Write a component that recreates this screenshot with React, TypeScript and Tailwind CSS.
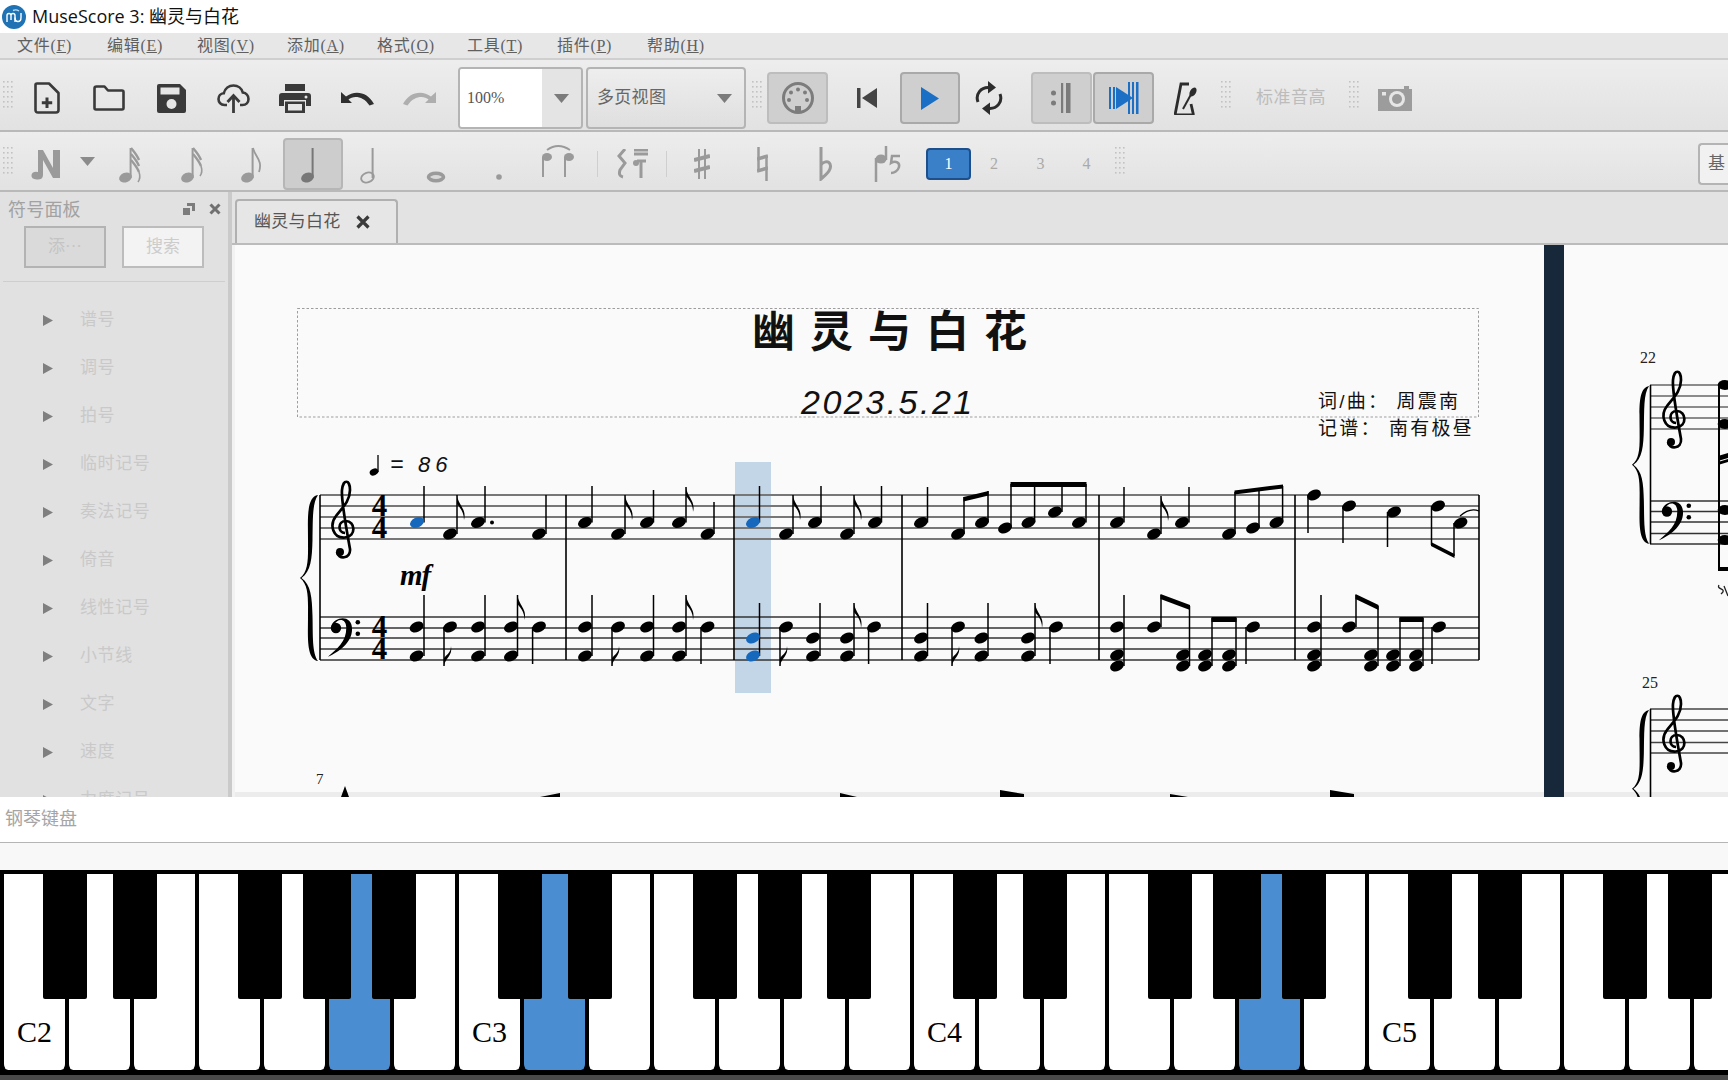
import React from "react";

const ICON = "#3a3a3a";
const GREY = "#9a9a9a";

function Handle({ h = 34 }: { h?: number }) {
  const dots: React.ReactNode[] = [];
  for (let c = 0; c < 3; c++)
    for (let r = 0; r < Math.floor(h / 5); r++)
      dots.push(<rect key={c + "-" + r} x={c * 4} y={r * 5} width={1.6} height={1.6} fill="#c2c2c2" />);
  return (
    <svg width={10} height={h} className="block">
      {dots}
    </svg>
  );
}

function Arrow({ color = "#7b7b7b" }: { color?: string }) {
  return (
    <svg width={15} height={9} className="block">
      <path d="M0 0H15L7.5 9Z" fill={color} />
    </svg>
  );
}

function Cell({ className, children }: { className: string; children?: React.ReactNode }) {
  return <div className={"flex items-center justify-center shrink-0 " + className}>{children}</div>;
}

function MenuItem({ label, k }: { label: string; k: string }) {
  return (
    <div className="w-[90px] shrink-0 text-[16px] tracking-[0.7px] text-[#5f5f5f]">
      {label}(<span className="underline">{k}</span>)
    </div>
  );
}

const Logo = () => (
  <svg width={24} height={24} viewBox="0 0 24 24" className="block">
    <circle cx={12} cy={12} r={12} fill="#1f72b3" />
    <path d="M5 17V10.5Q5 8.5 7 8.5T9 10.5V15M9 10.5Q9 8.5 11 8.5T13 10.5V17" stroke="#fff" strokeWidth={1.4} fill="none" />
    <path d="M13 12.5Q13 16.5 16 16.5T19 12.5V8" stroke="#fff" strokeWidth={1.4} fill="none" />
    <path d="M11 5.5Q14 4 17 6" stroke="#bfe0f5" strokeWidth={1.4} fill="none" />
  </svg>
);

const NewFile = () => (
  <svg width={26} height={32} viewBox="0 0 26 32" className="block">
    <path d="M3 1.500H15L24.500 11V28Q24.500 30.500 22 30.500H4Q1.500 30.500 1.500 28V3Q1.500 1.500 3 1.500Z" fill="none" stroke={ICON} strokeWidth={2.6} strokeLinejoin="round" />
    <path d="M13 15.500V26M7.800 20.800H18.200" stroke={ICON} strokeWidth={3} />
  </svg>
);
const Folder = () => (
  <svg width={32} height={26} viewBox="0 0 32 26" className="block">
    <path d="M3.500 1.500H11.500L15 5.500H29Q30.500 5.500 30.500 7V23Q30.500 24.500 29 24.500H3Q1.500 24.500 1.500 23V3.500Q1.500 1.500 3.500 1.500Z" fill="none" stroke={ICON} strokeWidth={2.6} strokeLinejoin="round" />
  </svg>
);
const Save = () => (
  <svg width={29} height={29} viewBox="0 0 29 29" className="block">
    <path d="M2 0H23L29 6V27Q29 29 27 29H2Q0 29 0 27V2Q0 0 2 0Z" fill={ICON} />
    <rect x={3.500} y={3.500} width={19} height={7} fill="#e6e6e6" />
    <circle cx={14.500} cy={20} r={5} fill="#e6e6e6" />
  </svg>
);
const Cloud = () => (
  <svg width={33} height={29} viewBox="0 0 33 29" className="block">
    <path d="M10 21H7.500C3.500 21 1.500 18 1.500 15C1.500 12 3.500 9.500 6.800 9.300C8 4.500 12 1.500 16.500 1.500C21 1.500 24.800 4.500 25.800 8.500C29 9 31.500 11.500 31.500 15C31.500 18.500 29 21 25.500 21H23" fill="none" stroke={ICON} strokeWidth={2.600} />
    <path d="M16.500 29V13M10.500 18L16.500 11.500L22.500 18" fill="none" stroke={ICON} strokeWidth={2.800} />
  </svg>
);
const Printer = () => (
  <svg width={32} height={29} viewBox="0 0 32 29" className="block">
    <rect x={6} y={0} width={20} height={7} fill={ICON} />
    <path d="M3 9H29Q32 9 32 12V22H27V16H5V22H0V12Q0 9 3 9Z" fill={ICON} />
    <path d="M6 17.500H26V29H6Z" fill={ICON} />
    <rect x={9} y={20} width={14} height={6.500} fill="#e6e6e6" />
    <circle cx={27} cy={13} r={1.500} fill="#e6e6e6" />
  </svg>
);
const Undo = ({ color = "#2f2f2f", flip = false }: { color?: string; flip?: boolean }) => (
  <svg width={33} height={15} viewBox="0 0 33 15" className={flip ? "block -scale-x-100" : "block"}>
    <path d="M0 1V12H11L7.500 8.500C12 4.500 22 4.500 28.500 14.500L33 13C27 1 14 -1.500 5 5.500Z" fill={color} />
  </svg>
);

const Midi = () => (
  <svg width={34} height={34} viewBox="0 0 34 34" className="block">
    <circle cx={17} cy={17} r={14.500} fill="none" stroke="#7c7c7c" strokeWidth={3} />
    {[[8, 19], [10, 11.500], [17, 8.500], [24, 11.500], [26, 19]].map(([x, y], i) => (
      <circle key={i} cx={x} cy={y} r={2} fill="#7c7c7c" />
    ))}
    <rect x={14} y={25} width={6} height={5} fill="#7c7c7c" />
  </svg>
);
const Skip = () => (
  <svg width={20} height={20} className="block">
    <rect x={0} y={0} width={3.500} height={20} fill="#444" />
    <path d="M20 0V20L5 10Z" fill="#444" />
  </svg>
);
const Play = () => (
  <svg width={18} height={23} className="block">
    <path d="M0 0L18 11.500L0 23Z" fill="#1b6fc4" />
  </svg>
);
const Loop = () => (
  <svg width={28} height={34} viewBox="0 0 28 34" className="block">
    <path d="M3 21C0 13 6 6 14 6.500M25 13C28 21 22 28 14 27.500" fill="none" stroke="#2c2c2c" strokeWidth={3} />
    <path d="M13 0L21 6.500L13 12.500ZM15 21.500L7 27.500L15 34Z" fill="#2c2c2c" />
  </svg>
);
const PanelLeft = () => (
  <svg width={24} height={30} className="block">
    <circle cx={3.500} cy={10} r={2.500} fill="#7b7b7b" />
    <circle cx={3.500} cy={20} r={2.500} fill="#7b7b7b" />
    <rect x={11} y={0} width={2.200} height={30} fill="#7b7b7b" />
    <rect x={16} y={0} width={4.500} height={30} fill="#7b7b7b" />
  </svg>
);
const PanelRight = () => (
  <svg width={30} height={32} className="block">
    <rect x={0} y={5} width={2} height={22} fill="#1b6fc4" />
    <rect x={4} y={5} width={2} height={22} fill="#1b6fc4" />
    <path d="M7 5L24 16L7 27Z" fill="#1b6fc4" />
    <rect x={19} y={0} width={2} height={32} fill="#1b6fc4" />
    <rect x={23} y={0} width={2} height={32} fill="#1b6fc4" />
    <rect x={27} y={0} width={2.500} height={32} fill="#1b6fc4" />
  </svg>
);
const Metronome = () => (
  <svg width={24} height={33} viewBox="0 0 24 33" className="block">
    <path d="M1 33L7 2H15M20 33H1" fill="none" stroke="#2c2c2c" strokeWidth={2.800} />
    <path d="M9 27L20 7" stroke="#2c2c2c" strokeWidth={2} />
    <ellipse cx={19} cy={10} rx={3} ry={5} transform="rotate(30 19 10)" fill="#2c2c2c" />
    <path d="M19.500 33L17 22" stroke="#2c2c2c" strokeWidth={2.800} />
  </svg>
);
const Camera = () => (
  <svg width={34} height={25} className="block">
    <path d="M0 3H26V0H31V3H34V25H0Z" fill="#9c9c9c" />
    <circle cx={19} cy={13} r={8} fill="#e6e6e6" />
    <circle cx={19} cy={13} r={5} fill="#9c9c9c" />
    <rect x={4} y={6} width={4} height={3.500} fill="#e6e6e6" />
  </svg>
);

function NoteIcon({ flags = 0, color = GREY, hollow = false }: { flags?: number; color?: string; hollow?: boolean }) {
  const fl = [];
  for (let i = 0; i < flags; i++) {
    const y = 4 + i * 6;
    fl.push(
      flags === 1 ? (
        <path key={i} d={`M13 ${y}C15 ${y + 9} 23 ${y + 12} 19 ${y + 24}`} fill="none" stroke={color} strokeWidth={1.800} />
      ) : (
        <path key={i} d={`M13 ${y}Q19 ${y + 7} 21 ${y + 12}`} fill="none" stroke={color} strokeWidth={2.400} />
      )
    );
  }
  return (
    <svg width={26} height={40} viewBox="0 0 26 40" className="block">
      <rect x={11.600} y={4} width={2} height={30} fill={color} />
      <ellipse cx={7.500} cy={33.500} rx={6.500} ry={4.800} transform="rotate(-22 7.500 33.500)" fill={hollow ? "none" : color} stroke={color} strokeWidth={hollow ? 1.800 : 0} />
      {fl}
      {flags > 1 && <path d={`M21 ${4 + (flags - 1) * 6 + 12}Q23 ${4 + (flags - 1) * 6 + 18} 20 ${4 + (flags - 1) * 6 + 22}`} fill="none" stroke={color} strokeWidth={1.600} />}
    </svg>
  );
}

function NIcon() {
  return (
    <svg width={30} height={32} viewBox="0 0 30 32" className="block">
      <path d="M5 2H12L22 20V2H29V30H22L12 12V27Q12 32 5.500 31.500Q0 31 0.500 27Q1.500 23 7 24V2Z" fill={GREY} />
    </svg>
  );
}

function Palette() {
  const items = ["谱号", "调号", "拍号", "临时记号", "奏法记号", "倚音", "线性记号", "小节线", "文字", "速度", "力度记号"];
  return (
    <div className="w-[232px] shrink-0 h-full bg-[#e1e1e1] border-r-4 border-[#cacaca] overflow-hidden">
      <div className="flex items-center h-[32px] pl-[8px] pt-[2px]">
        <span className="text-[18px] text-[#a2a2a2] tracking-[0.2px] pt-[3px]">符号面板</span>
        <svg width={12} height={12} className="block ml-[102px]">
          <path d="M4 0H12V8H9V3H4ZM0 5H7V12H0Z" fill="#7c7c7c" />
        </svg>
        <svg width={12} height={12} className="block ml-[14px]">
          <path d="M1.500 1.500L10.500 10.500M10.500 1.500L1.500 10.500" stroke="#707070" strokeWidth={3} />
        </svg>
      </div>
      <div className="flex gap-[16px] pl-[24px] h-[42px] mt-[2px]">
        <div className="w-[82px] h-full flex items-center justify-center bg-[#dadada] border-2 border-[#b3b3b3] text-[17px] text-[#c4c4c4]">添···</div>
        <div className="w-[82px] h-full flex items-center justify-center bg-[#f3f3f3] border-2 border-[#bcbcbc] text-[17px] text-[#cccccc]">搜索</div>
      </div>
      <div className="h-[1px] mt-[13px] mx-[3px] bg-[#cecece]" />
      <div className="pt-[14px]">
        {items.map((t) => (
          <div key={t} className="h-[48px] flex items-center pl-[43px]">
            <svg width={10} height={11} className="block shrink-0">
              <path d="M0 0L10 5.500L0 11Z" fill="#7f7f7f" />
            </svg>
            <span className="ml-[27px] text-[17px] tracking-[0.6px] text-[#c9c9c9]">{t}</span>
          </div>
        ))}
      </div>
    </div>
  );
}

type Ch = { x: number; ys: number[]; sx: number; to: number; flag?: "u" | "d"; c?: string; dot?: boolean };
const H1 = 522.5;
const H2 = 534;
const BL = "#1668bd";
const t = (x: number, y: number, sx: number, to: number, flag?: "u" | "d", c?: string): Ch => ({ x, ys: [y], sx, to, flag, c });
const trebleNotes: Ch[] = [
  t(417, H1, 424, 486, undefined, BL),
  t(450, H2, 457, 495, "u"),
  { ...t(478, H1, 485, 486), dot: true },
  t(539, H2, 546, 495),
  t(585, H1, 592, 486),
  t(618, H2, 625, 495, "u"),
  t(647, H1, 653.500, 490),
  t(679, H1, 686, 487, "u"),
  t(707.500, H2, 714, 502),
  t(753, H1, 759.500, 486, undefined, BL),
  t(786, H2, 793, 495, "u"),
  t(815, H1, 821, 486),
  t(847, H2, 854, 495, "u"),
  t(875, H1, 881.500, 486),
  t(921, H1, 927.500, 487),
  t(958, H2, 964, 497),
  t(982, H1, 988, 491),
  t(1005, 528, 1011, 484),
  t(1028.500, H1, 1034.600, 484),
  t(1055, 512, 1062, 484),
  t(1079, H1, 1086, 484),
  t(1117, H1, 1124, 487),
  t(1154, H2, 1161, 496, "u"),
  t(1182, H1, 1189, 487),
  t(1229, H2, 1235, 492),
  t(1253, 528, 1259, 489),
  t(1276.500, H1, 1282.600, 486),
  t(1314, 495, 1308, 533),
  t(1349, 506, 1343, 543),
  t(1394, 512, 1387.500, 547),
  t(1438, 506, 1431.500, 545),
  t(1460.500, 523, 1454, 556),
];
const HI = 627;
const LO = 656;
const c2 = (x: number, sx: number, flag?: "u"): Ch => ({ x, ys: [HI, LO], sx, to: 595, flag });
const c3 = (x: number, sx: number, flag?: "u"): Ch => ({ x, ys: [638, LO], sx, to: 603, flag });
const dn = (x: number, sx: number, to = 664, flag?: "d"): Ch => ({ x, ys: [HI], sx, to, flag });
const bassNotes: Ch[] = [
  c2(416.600, 424),
  dn(450, 444, 666, "d"),
  c2(478, 485),
  c2(511, 517.500, "u"),
  dn(539, 532.600),
  c2(585, 592),
  dn(618, 612, 666, "d"),
  c2(647, 653.500),
  c2(679, 686, "u"),
  dn(707.500, 701),
  { ...c3(753, 759.500), c: BL },
  dn(786, 780, 666, "d"),
  c3(813, 820),
  c3(847, 854, "u"),
  dn(874, 868.600),
  c3(921, 927.500),
  dn(958, 952, 666, "d"),
  c3(981.400, 988),
  c3(1028, 1035, "u"),
  dn(1056, 1050),
  { x: 1117, ys: [627, 655, 666], sx: 1124, to: 595 },
  { x: 1154, ys: [627], sx: 1161, to: 595 },
  { x: 1183, ys: [655, 666], sx: 1189.500, to: 606 },
  { x: 1205, ys: [655, 666], sx: 1212, to: 618 },
  { x: 1229, ys: [655, 666], sx: 1236, to: 618 },
  dn(1253, 1246),
  { x: 1314, ys: [627, 655, 666], sx: 1321, to: 595 },
  { x: 1349, ys: [627], sx: 1356, to: 595 },
  { x: 1371, ys: [655, 666], sx: 1378, to: 606 },
  { x: 1393, ys: [655, 666], sx: 1400, to: 618 },
  { x: 1416, ys: [655, 666], sx: 1423, to: 618 },
  dn(1439, 1432),
];

function Note({ n }: { n: Ch }) {
  const fill = n.c ?? "#000";
  const up = n.to < n.ys[0];
  const from = up ? Math.max(...n.ys) : Math.min(...n.ys);
  return (
    <g>
      <line x1={n.sx} x2={n.sx} y1={from} y2={n.to} stroke="#000" strokeWidth={1.500} />
      {n.ys.map((y) => (
        <ellipse key={y} cx={n.x} cy={y} rx={7.300} ry={5} transform={`rotate(-25 ${n.x} ${y})`} fill={fill} />
      ))}
      {n.flag === "u" && <path d={`M${n.sx} ${n.to}C${n.sx + 1} ${n.to + 10} ${n.sx + 10} ${n.to + 14} ${n.sx + 7} ${n.to + 25}C${n.sx + 7} ${n.to + 16} ${n.sx + 2} ${n.to + 12} ${n.sx} ${n.to + 9}Z`} fill="#000" />}
      {n.flag === "d" && <path d={`M${n.sx} ${n.to}C${n.sx + 1} ${n.to - 8} ${n.sx + 9} ${n.to - 10} ${n.sx + 7} ${n.to - 20}C${n.sx + 7} ${n.to - 13} ${n.sx + 2} ${n.to - 11} ${n.sx} ${n.to - 8}Z`} fill="#000" />}
      {n.dot && <circle cx={n.x + 14} cy={n.ys[0]} r={2} fill="#000" />}
    </g>
  );
}

const Treble = ({ x, y }: { x: number; y: number }) => (
  <g transform={`translate(${x} ${y})`}>
    <path d="M1 5C-6 5 -7 -7 2 -7C11 -7 13 8 1 9.500C-11 10.500 -15 -3 -8 -12C-3 -19 6 -26 6 -38C6 -49 -1 -49 -2 -38C-3 -28 4 10 6 21C7 31 -6 32 -7 24" fill="none" stroke="#000" strokeWidth={2.700} />
    <circle cx={-4} cy={24} r={4} fill="#000" />
  </g>
);
const Bass = ({ x, y }: { x: number; y: number }) => (
  <g transform={`translate(${x} ${y}) scale(1.150)`}>
    <circle cx={-7} cy={0} r={4.500} fill="#000" />
    <path d="M-11 -2C-8 -10 7 -12 7 1C7 13 -5 21 -14 25C-6 18 2 12 2 0C2 -9 -6 -9 -9 -2Z" fill="#000" />
    <circle cx={12} cy={-5} r={2} fill="#000" />
    <circle cx={12} cy={5} r={2} fill="#000" />
  </g>
);
const Brace = ({ x, y, s = 1 }: { x: number; y: number; s?: number }) => (
  <path
    transform={`translate(${x} ${y}) scale(${s})`}
    d="M18 0C6 2 8 25 8 45C8 62 9 76 0 83C9 90 8 104 8 121C8 141 6 164 18 166C12 158 13 140 12.500 121C12 102 11 90 1.500 83C11 76 12 64 12.500 45C13 26 12 8 18 0Z"
    fill="#000"
  />
);

function Lines({ x1, x2, ys, color, w = 1.300 }: { x1: number; x2: number; ys: number[]; color: string; w?: number }) {
  return (
    <>
      {ys.map((y) => (
        <line key={y} x1={x1} x2={x2} y1={y} y2={y} stroke={color} strokeWidth={w} />
      ))}
    </>
  );
}

const SERIF = "'Liberation Serif','Noto Sans CJK SC',serif";
const HAND = "'Liberation Sans','Noto Sans CJK SC',sans-serif";

function Score() {
  const tre = [495, 506, 517, 528, 539];
  const bas = [617, 628, 638, 649, 660];
  return (
    <svg viewBox="235 245 1493 552" width={1493} height={552} className="block">
      <rect x={235} y={245} width={1493} height={552} fill="#fafafa" />
      <rect x={235} y={792} width={1493} height={5} fill="#ececec" />
      <rect x={1544} y={245} width={20} height={552} fill="#16283a" />
      <rect x={297.500} y={308.500} width={1181} height={108.500} fill="none" stroke="#9d9d9d" strokeWidth={1} strokeDasharray="2.500 2" />
      <text x={752} y={347} fontFamily={HAND} fontSize={43} fontWeight={700} letterSpacing={15} fill="#111">幽灵与白花</text>
      <text x={801} y={414} fontFamily={HAND} fontSize={34} fontStyle="italic" letterSpacing={2.500} fill="#111">2023.5.21</text>
      <text x={1318} y={408} fontFamily={HAND} fontSize={19} letterSpacing={2.200} fill="#111">词/曲： 周震南</text>
      <text x={1318} y={435} fontFamily={HAND} fontSize={19} letterSpacing={2.200} fill="#111">记谱： 南有极昼</text>

      <rect x={735} y={462} width={36} height={231} fill="#c3d6e8" />

      <Lines x1={320} x2={1479} ys={tre} color="#777" w={2} />
      <Lines x1={320} x2={1479} ys={bas} color="#333" />
      <line x1={320} x2={320} y1={495} y2={660} stroke="#000" strokeWidth={1.600} />
      {[566, 734, 902, 1099, 1295, 1479].map((x) => (
        <line key={x} x1={x} x2={x} y1={495} y2={660} stroke="#000" strokeWidth={1.600} />
      ))}
      <Brace x={300} y={495} />
      <Treble x={344} y={528} />
      <Bass x={344} y={628} />
      {[516, 538, 637, 659].map((y) => (
        <text key={y} x={379.500} y={y} textAnchor="middle" fontFamily={SERIF} fontWeight={700} fontSize={31} fill="#000">4</text>
      ))}

      <ellipse cx={374} cy={472} rx={4.500} ry={3.300} transform="rotate(-25 374 472)" fill="#000" />
      <line x1={378} x2={378} y1={472} y2={455} stroke="#000" strokeWidth={1.300} />
      <text x={390} y={472} fontFamily={HAND} fontStyle="italic" fontSize={23} letterSpacing={5} fill="#111">=</text>
      <text x={418} y={472} fontFamily={HAND} fontStyle="italic" fontSize={22} letterSpacing={5} fill="#111">86</text>
      <text x={400} y={585} fontFamily={SERIF} fontStyle="italic" fontWeight={700} fontSize={29} letterSpacing={-1} fill="#000">mf</text>

      {trebleNotes.map((n, i) => <Note key={"t" + i} n={n} />)}
      {bassNotes.map((n, i) => <Note key={"b" + i} n={n} />)}

      <path d="M963.500 497L988.500 491V495.500L963.500 501.500Z" fill="#000" />
      <rect x={1010.500} y={482} width={76} height={5} fill="#000" />
      <path d="M1234.500 490.500L1283 484.500V488.500L1234.500 494.500Z" fill="#000" />
      <path d="M1431 542L1454.500 554V558L1431 546Z" fill="#000" />
      <path d="M1460 516Q1470 507 1479 511" fill="none" stroke="#000" strokeWidth={1.200} />
      <path d="M1160.500 594L1190 605V610L1160.500 599Z" fill="#000" />
      <rect x={1211.500} y={617} width={25} height={5} fill="#000" />
      <path d="M1355.500 594L1378.500 605V610L1355.500 599Z" fill="#000" />
      <rect x={1399.500} y={617} width={24} height={5} fill="#000" />

      {/* next page */}
      <text x={1640} y={363} fontFamily={SERIF} fontSize={16} fill="#222">22</text>
      <Lines x1={1650} x2={1728} ys={[385, 396, 407, 418, 429]} color="#666" />
      <Lines x1={1650} x2={1728} ys={[501, 511.500, 522, 533.500, 544]} color="#333" />
      <line x1={1650.500} x2={1650.500} y1={385} y2={544} stroke="#000" strokeWidth={1.600} />
      <Brace x={1632} y={386} s={0.950} />
      <Treble x={1675} y={418} />
      <Bass x={1675} y={511.500} />
      <line x1={1719} x2={1719} y1={385} y2={570} stroke="#000" strokeWidth={2} />
      <ellipse cx={1725} cy={385} rx={7.300} ry={5} fill="#000" />
      <ellipse cx={1725} cy={424} rx={7.300} ry={5} fill="#000" />
      <path d="M1718 456L1728 453V458L1718 461ZM1718 462L1728 459V462L1718 465Z" fill="#000" />
      <ellipse cx={1725} cy={510} rx={7.300} ry={5} fill="#000" />
      <ellipse cx={1725} cy={540} rx={7.300} ry={5} fill="#000" />
      <rect x={1718} y={567} width={10} height={4} fill="#000" />
      <path d="M1719 585C1716 590 1728 588 1721 594M1724 586L1728 596" fill="none" stroke="#222" strokeWidth={1.300} />

      <text x={1642} y={688} fontFamily={SERIF} fontSize={16} fill="#222">25</text>
      <Lines x1={1650} x2={1728} ys={[709, 720, 731, 742.500, 753]} color="#444" />
      <line x1={1650.500} x2={1650.500} y1={709} y2={797} stroke="#000" strokeWidth={1.600} />
      <Brace x={1632} y={710} s={0.950} />
      <Treble x={1675} y={742} />

      {/* next system, cut by the keyboard panel */}
      <text x={316} y={784} fontFamily={SERIF} fontSize={15} fill="#222">7</text>
      <path d="M345 786L349 797H341Z" fill="#000" />
      <path d="M540 797L560 793V797ZM840 793L857 797H840ZM1000 790L1024 794V797H1000ZM1170 794L1188 797H1170ZM1330 790L1354 794V797H1330Z" fill="#000" />
    </svg>
  );
}

const OCTAVE_BLACK = [43, 112.500, 238, 303, 372];
const BLUE_TOPS = [
  { x: 351, w: 21 },
  { x: 542, w: 26 },
  { x: 1261, w: 21 },
];
const WIDE_BLACK = [303, 1213];

function Keyboard() {
  const keys = Array.from({ length: 27 }, (_, i) => i);
  const blacks: number[] = [];
  for (let o = 0; o < 4; o++) OCTAVE_BLACK.forEach((b) => blacks.push(b + o * 455));
  const active = [5, 8, 19];
  return (
    <div className="relative h-[210px] bg-[#000] pt-[4px] pb-[4px] overflow-hidden">
      <div className="flex h-[196px] pl-[2px]">
        {keys.map((i) => (
          <div
            key={i}
            className={
              "w-[65px] shrink-0 border-x-2 border-black rounded-b-[6px] flex flex-col justify-end pb-[20px] pl-[13px] " +
              (active.includes(i) ? "bg-[#4a8dd1]" : "bg-white")
            }
          >
            {i % 7 === 0 && (
              <span className="text-[30px] leading-[36px] text-black [font-family:'Liberation_Serif',serif]">
                {"C" + (i / 7 + 2)}
              </span>
            )}
          </div>
        ))}
      </div>
      {blacks.map((x) => (
        <div key={x} className="absolute top-0 h-[129px] bg-black rounded-b-[2px]" style={{ left: x, width: WIDE_BLACK.includes(x) ? 48 : 44 }} />
      ))}
      {BLUE_TOPS.map((b) => (
        <div key={b.x} className="absolute top-[4px] h-[125px] bg-[#4a8dd1]" style={{ left: b.x, width: b.w }} />
      ))}
      <div className="absolute left-0 right-0 bottom-0 h-[5px] bg-[#4a4a4a]" />
    </div>
  );
}

export default function App() {
  return (
    <div className="w-[1728px] h-[1080px] overflow-hidden flex flex-col bg-white text-[#333] [font-family:'Liberation_Serif','Noto_Sans_CJK_SC',serif]">
      <div className="h-[33px] shrink-0 flex items-center bg-white pl-[2px] gap-[6px]">
        <Logo />
        <span className="text-[18px] text-[#111] [font-family:'Open_Sans','Noto_Sans_CJK_SC',sans-serif]">MuseScore 3: 幽灵与白花</span>
      </div>

      <div className="h-[27px] shrink-0 flex items-center pl-[17px] pt-[1px] bg-[#e7e7e7] border-b-2 border-[#cfcfcf]">
        {[["文件", "F"], ["编辑", "E"], ["视图", "V"], ["添加", "A"], ["格式", "O"], ["工具", "T"], ["插件", "P"], ["帮助", "H"]].map(([l, k]) => (
          <MenuItem key={l} label={l} k={k} />
        ))}
      </div>

      <div className="h-[72px] shrink-0 flex items-center pt-[6px] bg-linear-to-b from-[#ededed] to-[#e2e2e2] border-b-2 border-[#b9b9b9]">
        <Cell className="w-[16px]"><Handle /></Cell>
        <Cell className="w-[62px]"><NewFile /></Cell>
        <Cell className="w-[62px]"><Folder /></Cell>
        <Cell className="w-[62px]"><Save /></Cell>
        <Cell className="w-[62px]"><Cloud /></Cell>
        <Cell className="w-[62px]"><Printer /></Cell>
        <Cell className="w-[62px]"><Undo /></Cell>
        <Cell className="w-[62px]"><Undo flip color="#aeaeae" /></Cell>
        <div className="ml-[8px] w-[125px] h-[62px] shrink-0 flex rounded-[4px] border-2 border-[#b4b4b4] overflow-hidden">
          <div className="w-[82px] bg-white flex items-center pl-[7px] text-[16px] text-[#555]">100%</div>
          <div className="flex-1 bg-[#e4e4e4] flex items-center justify-center"><Arrow /></div>
        </div>
        <div className="ml-[3px] w-[160px] h-[62px] shrink-0 flex items-center justify-between rounded-[4px] border-2 border-[#b4b4b4] bg-linear-to-b from-[#eeeeee] to-[#dfdfdf] pl-[9px] pr-[12px]">
          <span className="text-[17px] tracking-[0.3px] text-[#666]">多页视图</span>
          <Arrow />
        </div>
        <Cell className="w-[21px]"><Handle /></Cell>
        <Cell className="w-[61px] h-[52px] rounded-[4px] border-2 border-[#bdbdbd] bg-[#cfcfcf]"><Midi /></Cell>
        <Cell className="w-[72px] pl-[6px]"><Skip /></Cell>
        <Cell className="w-[60px] h-[52px] rounded-[4px] border-2 border-[#a9a9a9] bg-[#cfcfcf]"><Play /></Cell>
        <Cell className="w-[65px] pr-[7px]"><Loop /></Cell>
        <Cell className="ml-[6px] w-[61px] h-[52px] rounded-[4px] border-2 border-[#bdbdbd] bg-[#cfcfcf]"><PanelLeft /></Cell>
        <Cell className="ml-[1px] w-[61px] h-[52px] rounded-[4px] border-2 border-[#a9a9a9] bg-[#cfcfcf]"><PanelRight /></Cell>
        <Cell className="w-[64px]"><Metronome /></Cell>
        <Cell className="w-[16px]"><Handle /></Cell>
        <span className="ml-[22px] shrink-0 text-[17px] tracking-[0.5px] text-[#bcbcbc]">标准音高</span>
        <Cell className="ml-[22px] w-[12px]"><Handle /></Cell>
        <Cell className="ml-[18px] w-[34px]"><Camera /></Cell>
      </div>

      <div className="h-[60px] shrink-0 flex items-center pt-[6px] bg-linear-to-b from-[#ededed] to-[#e2e2e2] border-b-2 border-[#b9b9b9]">
        <Cell className="w-[16px]"><Handle /></Cell>
        <Cell className="w-[60px]"><NIcon /></Cell>
        <Cell className="w-[22px] pb-[6px]"><Arrow color="#8b8b8b" /></Cell>
        <Cell className="w-[66px]"><NoteIcon flags={3} /></Cell>
        <Cell className="w-[58px]"><NoteIcon flags={2} /></Cell>
        <Cell className="w-[61px]"><NoteIcon flags={1} /></Cell>
        <Cell className="w-[60px] h-[52px] rounded-[4px] border-2 border-[#b6b6b6] bg-[#cdcdcd]"><NoteIcon color="#777" /></Cell>
        <Cell className="w-[60px]"><NoteIcon hollow /></Cell>
        <Cell className="w-[66px]">
          <svg width={20} height={40} viewBox="0 0 20 40" className="block">
            <ellipse cx={10} cy={33} rx={7.500} ry={3.800} fill="#d8d8d8" stroke={GREY} strokeWidth={3.600} />
          </svg>
        </Cell>
        <Cell className="w-[60px]">
          <svg width={8} height={40} viewBox="0 0 8 40" className="block"><circle cx={4} cy={33} r={2.800} fill={GREY} /></svg>
        </Cell>
        <Cell className="w-[62px]">
          <svg width={44} height={38} viewBox="0 0 44 38" className="block">
            <path d="M5 12V32M27 12V32" stroke={GREY} strokeWidth={2} />
            <ellipse cx={9} cy={12} rx={5} ry={4} fill={GREY} />
            <ellipse cx={31} cy={12} rx={5} ry={4} fill={GREY} />
            <path d="M9 5Q20 -3 32 5" fill="none" stroke={GREY} strokeWidth={1.800} />
          </svg>
        </Cell>
        <Cell className="w-[12px]"><div className="w-[1px] h-[26px] bg-[#cfcfcf]" /></Cell>
        <Cell className="w-[59px]">
          <svg width={32} height={30} viewBox="0 0 32 30" className="block">
            <path d="M8 0L2 7L8 14L3 21Q1 27 6 28" fill="none" stroke={GREY} strokeWidth={3} />
            <path d="M17 1H31M17 5H31" stroke={GREY} strokeWidth={3} />
            <path d="M20 12H29M24 12V29" stroke={GREY} strokeWidth={3} />
            <circle cx={19} cy={14} r={3} fill={GREY} />
          </svg>
        </Cell>
        <Cell className="w-[9px]"><div className="w-[1px] h-[26px] bg-[#cfcfcf]" /></Cell>
        <Cell className="w-[62px]">
          <svg width={16} height={30} viewBox="0 0 16 30" className="block">
            <path d="M5 0V30M11 0V30" stroke={GREY} strokeWidth={2} />
            <path d="M0 11L16 7M0 22L16 18" stroke={GREY} strokeWidth={4} />
          </svg>
        </Cell>
        <Cell className="w-[58px]">
          <svg width={11} height={34} viewBox="0 0 11 34" className="block">
            <path d="M1.500 0V24M9.500 10V34" stroke={GREY} strokeWidth={2.500} />
            <path d="M0 12L11 9M0 24L11 21" stroke={GREY} strokeWidth={3.500} />
          </svg>
        </Cell>
        <Cell className="w-[68px]">
          <svg width={13} height={34} viewBox="0 0 13 34" className="block">
            <path d="M2 0V32C9 26 13 22 11 17C9 13 4 15 2 18" fill="none" stroke={GREY} strokeWidth={3} />
          </svg>
        </Cell>
        <Cell className="w-[58px]">
          <svg width={28} height={36} viewBox="0 0 28 36" className="block">
            <path d="M2 12V36" stroke={GREY} strokeWidth={2.500} />
            <ellipse cx={7} cy={13} rx={5.500} ry={4.500} fill={GREY} />
            <path d="M12 0V14" stroke={GREY} strokeWidth={2.500} />
            <path d="M26 10H18L17 17C22 14 26 17 25 21C24 25 20 27 17 27" fill="none" stroke={GREY} strokeWidth={2.500} />
          </svg>
        </Cell>
        <div className="ml-[9px] w-[45px] h-[32px] shrink-0 flex items-center justify-center rounded-[4px] border-2 border-[#1d4f8b] bg-[#3a80c9] text-white text-[16px]">1</div>
        <div className="w-[46px] shrink-0 text-center text-[16px] text-[#aaaaaa]">2</div>
        <div className="w-[47px] shrink-0 text-center text-[16px] text-[#aaaaaa]">3</div>
        <div className="w-[45px] shrink-0 text-center text-[16px] text-[#aaaaaa]">4</div>
        <Cell className="w-[22px]"><Handle /></Cell>
        <div className="ml-auto w-[30px] h-[42px] shrink-0 flex items-center pl-[8px] whitespace-nowrap overflow-hidden rounded-l-[4px] border-2 border-r-0 border-[#b4b4b4] bg-[#f1f1f1] text-[17px] text-[#666]">基</div>
      </div>

      <div className="h-[605px] shrink-0 flex">
        <Palette />
        <div className="flex-1 min-w-0 flex flex-col bg-[#e3e3e3]">
          <div className="h-[53px] shrink-0 flex items-end pl-[3px] border-b-2 border-[#bbbbbb]">
            <div className="w-[163px] h-[44px] flex items-center pl-[17px] rounded-t-[4px] border-2 border-b-0 border-[#b0b0b0] bg-[#e6e6e6]">
              <span className="text-[17px] tracking-[0.3px] text-[#555]">幽灵与白花</span>
              <svg width={14} height={14} className="block ml-[15px]">
                <path d="M1.500 1.500L12.500 12.500M12.500 1.500L1.500 12.500" stroke="#3a3a3a" strokeWidth={3.200} />
              </svg>
            </div>
          </div>
          <div className="pl-[3px] bg-[#f2f2f2]"><Score /></div>
        </div>
      </div>

      <div className="h-[46px] shrink-0 flex items-center pl-[5px] bg-white border-b border-[#b5b5b5] text-[18px] text-[#a5a5a5]">钢琴键盘</div>
      <div className="h-[27px] shrink-0 bg-[#f8f8f8]" />
      <Keyboard />
    </div>
  );
}
